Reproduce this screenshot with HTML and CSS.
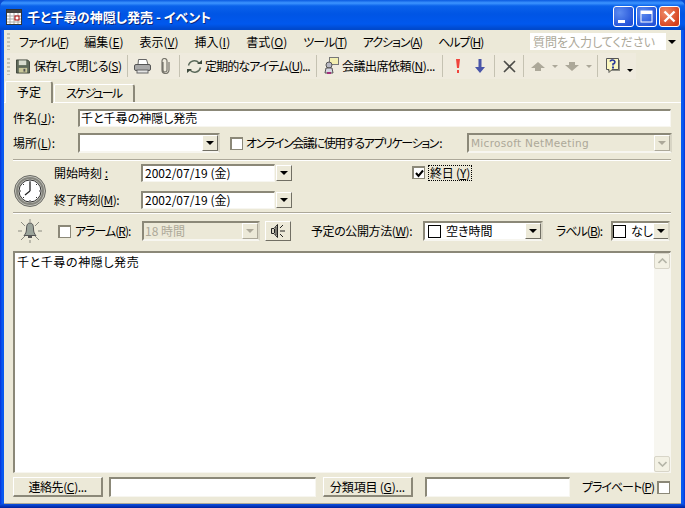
FILE: index.html
```html
<!DOCTYPE html>
<html lang="ja">
<head>
    <meta charset="UTF-8">
    <title>千と千尋の神隠し発売 - イベント</title>
    <link rel="stylesheet" href="styles.css">
</head>
<body>
    <div class="window">
        <div class="titlebar">
            <svg class="title-icon" width="16" height="16" viewBox="0 0 16 16">
                <rect x="0.5" y="0.5" width="15" height="15" fill="#fff" stroke="#333"/>
                <rect x="1" y="1" width="14" height="3" fill="#444"/>
                <path d="M1 7h14M1 10h14M1 13h14M4 4v11M8 4v11M12 4v11" stroke="#aaa"/>
                <rect x="9" y="7" width="4" height="4" fill="#fff" stroke="#a00"/>
            </svg>
            <span class="title-text">千と千尋の神隠し発売 - イベント</span>
            <div class="caption-btn">
                <svg width="21" height="21" viewBox="0 0 21 21"><rect x="5" y="14" width="7" height="3" fill="#fff"/></svg>
            </div>
            <div class="caption-btn">
                <svg width="21" height="21" viewBox="0 0 21 21"><rect x="5" y="5" width="11" height="11" fill="none" stroke="#fff"/><rect x="5" y="5" width="11" height="3" fill="#fff"/></svg>
            </div>
            <div class="caption-btn close">
                <svg width="21" height="21" viewBox="0 0 21 21"><path d="M5.5 5.5l10 10M15.5 5.5l-10 10" stroke="#fff" stroke-width="2.4"/></svg>
            </div>
        </div>

        <div class="content">
            <div class="menubar">
                <div class="grip"></div>
                <span class="menu-item kana">ファイル(<u>F</u>)</span>
                <span class="menu-item">編集(<u>E</u>)</span>
                <span class="menu-item">表示(<u>V</u>)</span>
                <span class="menu-item">挿入(<u>I</u>)</span>
                <span class="menu-item">書式(<u>O</u>)</span>
                <span class="menu-item kana">ツール(<u>T</u>)</span>
                <span class="menu-item kana">アクション(<u>A</u>)</span>
                <span class="menu-item kana">ヘルプ(<u>H</u>)</span>
                <div class="ask">
                    <span class="ask-text">質問を入力してください</span>
                    <span class="ask-arrow"><i class="arrow"></i></span>
                </div>
            </div>

            <div class="toolbar">
                <div class="grip"></div>
                <svg class="tool save" width="14" height="15" viewBox="0 0 15 15">
                    <path d="M0.5 0.5h12l2 2v12h-14z" fill="#5f6a5a" stroke="#3c4238"/>
                    <rect x="3" y="1" width="8" height="5" fill="#d9dccf"/>
                    <rect x="3" y="9" width="9" height="5" fill="#c9c79a"/>
                    <rect x="8" y="10" width="2" height="3" fill="#555"/>
                </svg>
                <span class="tool-text t-save">保存して閉じる(<u>S</u>)</span>
                <div class="tool-sep"></div>
                <svg class="tool print" width="17" height="15" viewBox="0 0 17 15">
                    <path d="M4.5 0.5h8l1.5 5h-10z" fill="#fff" stroke="#666"/>
                    <rect x="0.5" y="5.5" width="16" height="6" rx="1.5" fill="#a9a9a9" stroke="#555"/>
                    <rect x="3" y="11" width="11" height="3" fill="#e4e4e4" stroke="#666"/>
                </svg>
                <svg class="tool clip" width="10" height="16" viewBox="0 0 10 16">
                    <path d="M3 4v8a2 2 0 0 0 4 0V3a2.200 2.200 0 0 0-5 0v9a3.500 3.500 0 0 0 7 0V4" fill="none" stroke="#77756c" stroke-width="1.200"/>
                </svg>
                <div class="tool-sep"></div>
                <svg class="tool recur" width="17" height="15" viewBox="0 0 17 15">
                    <path d="M2.500 6.500A6 6 0 0 1 13 4" fill="none" stroke="#5b6a5b" stroke-width="1.400"/>
                    <path d="M14.500 8.500A6 6 0 0 1 4 11" fill="none" stroke="#5b6a5b" stroke-width="1.400"/>
                    <path d="M11 5h5V1zM6 10H1v4z" fill="#3d4a3d"/>
                </svg>
                <span class="tool-text t-recur">定期的なアイテム(<u>U</u>)...</span>
                <div class="tool-sep"></div>
                <svg class="tool meet" width="16" height="18" viewBox="0 0 16 18">
                    <rect x="6.500" y="0.500" width="9" height="7" fill="#f3efb0" stroke="#777"/>
                    <circle cx="6" cy="8" r="3" fill="#b9b9c4" stroke="#555"/>
                    <path d="M2 16l1-5h6l1 5z" fill="#d8d8e2" stroke="#555"/>
                    <rect x="4" y="15" width="4" height="2" fill="#a3307a"/>
                </svg>
                <span class="tool-text t-meet">会議出席依頼(<u>N</u>)...</span>
                <div class="tool-sep"></div>
                <svg class="tool excl" width="4" height="14" viewBox="0 0 4 14">
                    <path d="M0 0h4l-1 9H1zM1 11h2v3H1z" fill="#f0443c"/>
                </svg>
                <svg class="tool low" width="10" height="14" viewBox="0 0 10 14">
                    <path d="M3.500 0h3v8H10l-5 6-5-6h3.500z" fill="#4a55a8"/>
                </svg>
                <div class="tool-sep s-low"></div>
                <svg class="tool del" width="13" height="13" viewBox="0 0 13 13">
                    <path d="M1 1l11 11M12 1L1 12" stroke="#4c4c48" stroke-width="1.600"/>
                </svg>
                <div class="tool-sep s-del"></div>
                <svg class="tool up" width="14" height="9" viewBox="0 0 14 9"><path d="M7 0l7 6H10v3H4V6H0z" fill="#aca899"/></svg>
                <i class="mini-arrow a-up"></i>
                <svg class="tool down" width="14" height="9" viewBox="0 0 14 9"><path d="M4 0h6v3h4l-7 6-7-6h4z" fill="#aca899"/></svg>
                <i class="mini-arrow a-down"></i>
                <div class="tool-sep s-nav"></div>
                <svg class="tool help" width="14" height="16" viewBox="0 0 14 16">
                    <rect x="2" y="2" width="12" height="11" fill="#8d8d85"/>
                    <path d="M0.500 0.500h12v11H6l-3 3v-3H0.500z" fill="#fbf7c0" stroke="#555"/>
                    <path d="M4 3.500a2.500 2 0 1 1 3 2.500V7.500" fill="none" stroke="#2b3a9a" stroke-width="1.600"/>
                    <rect x="6" y="8.500" width="2" height="2" fill="#2b3a9a"/>
                </svg>
                <i class="mini-arrow a-help"></i>
            </div>

            <div class="tabs">
                <div class="tab active">予定</div>
                <div class="tab t-schedule">スケジュール</div>
            </div>

            <div class="panel">
                <div class="row r-subject">
                    <label class="lbl l-first">件名(<u>J</u>):</label>
                    <div class="field f-subject">千と千尋の神隠し発売</div>
                </div>
                <div class="row r-place">
                    <label class="lbl l-first">場所(<u>L</u>):</label>
                    <div class="field combo f-place"><span class="combo-btn"><i class="arrow"></i></span></div>
                    <span class="check c-online"></span>
                    <label class="lbl l-online">オンライン会議に使用するアプリケーション :</label>
                    <div class="field combo disabled f-app">
                        <span class="val latin">Microsoft NetMeeting</span>
                        <span class="combo-btn"><i class="arrow"></i></span>
                    </div>
                </div>
                <div class="sep"></div>

                <div class="time-block">
                    <svg class="clock" width="34" height="34" viewBox="0 0 34 34">
                        <circle cx="17" cy="17" r="15.500" fill="#c4c4bc" stroke="#6a6a64"/>
                        <circle cx="17" cy="17" r="13" fill="none" stroke="#86867e" stroke-width="2"/>
                        <circle cx="17" cy="17" r="11" fill="#fff" stroke="#333"/>
                        <path d="M17 17V8M17 17l-5 4" stroke="#222" stroke-width="1.300"/>
                        <path d="M17 7v1M17 26v1M7 17h1M26 17h1M10 10l1 1M23 23l1 1M24 10l-1 1M10 24l1-1" stroke="#333"/>
                    </svg>
                    <div class="time-rows">
                        <div class="row r-time">
                            <label class="lbl l-time">開始時刻 <u>:</u></label>
                            <div class="field f-date">2002/07/19 (金)</div>
                            <span class="btn-small"><i class="arrow"></i></span>
                            <span class="check checked c-allday">
                                <svg width="9" height="9" viewBox="0 0 9 9"><path d="M1 4l2.500 3L8 1.500" fill="none" stroke="#000" stroke-width="2"/></svg>
                            </span>
                            <label class="lbl l-allday">終日 (<u>Y</u>)</label>
                        </div>
                        <div class="row r-time r-end">
                            <label class="lbl l-time">終了時刻(<u>M</u>):</label>
                            <div class="field f-date">2002/07/19 (金)</div>
                            <span class="btn-small"><i class="arrow"></i></span>
                        </div>
                    </div>
                </div>
                <div class="sep s-second"></div>

                <div class="row r-alarm">
                    <svg class="bell" width="26" height="24" viewBox="0 0 26 24">
                        <path d="M13 0v3M13 21v3M1 12h4M21 12h4M4 3l4 4M22 3l-4 4M4 21l4-4M22 21l-4-4" stroke="#8a8a80"/>
                        <path d="M13 4c3 0 3.500 3 3.500 6 0 3 1 5 2.500 6.500H7C8.500 15 9.500 13 9.500 10c0-3 .5-6 3.500-6z" fill="#9aa39a" stroke="#555"/>
                        <rect x="11" y="17" width="4" height="2" fill="#555"/>
                    </svg>
                    <span class="check c-alarm"></span>
                    <label class="lbl l-alarm kana">アラーム(<u>R</u>):</label>
                    <div class="field combo disabled f-alarm">
                        <span class="val">18 時間</span>
                        <span class="combo-btn"><i class="arrow"></i></span>
                    </div>
                    <span class="sound-btn">
                        <svg width="15" height="14" viewBox="0 0 15 14">
                            <path d="M6.500 0.500v13L3 9.500H0.500v-5H3z" fill="#d8d5c5" stroke="#222"/>
                            <path d="M3.500 5v4M5 3v8" stroke="#222"/>
                            <path d="M9 4l3-3M9 7h5M9 10l3 3" fill="none" stroke="#222"/>
                        </svg>
                    </span>
                    <label class="lbl l-show">予定の公開方法(<u>W</u>):</label>
                    <div class="field combo f-show">
                        <span class="swatch"></span><span class="val">空き時間</span>
                        <span class="combo-btn"><i class="arrow"></i></span>
                    </div>
                    <label class="lbl l-label kana">ラベル(<u>B</u>):</label>
                    <div class="field combo f-label">
                        <span class="swatch"></span><span class="val">なし</span>
                        <span class="combo-btn"><i class="arrow"></i></span>
                    </div>
                </div>

                <div class="notes">
                    <div class="notes-text">千と千尋の神隠し発売</div>
                    <div class="scrollbar">
                        <span class="scroll-btn"><svg width="9" height="6" viewBox="0 0 9 6"><path d="M0.500 5l4-4 4 4" fill="none" stroke="#b5b5a8" stroke-width="1.600"/></svg></span>
                        <span class="scroll-btn"><svg width="9" height="6" viewBox="0 0 9 6"><path d="M0.500 1l4 4 4-4" fill="none" stroke="#b5b5a8" stroke-width="1.600"/></svg></span>
                    </div>
                </div>

                <div class="row r-bottom">
                    <button class="btn b-contact">連絡先(<u>C</u>)...</button>
                    <div class="field f-contact"></div>
                    <button class="btn b-category">分類項目 (<u>G</u>)...</button>
                    <div class="field f-category"></div>
                    <label class="lbl l-private kana">プライベート(<u>P</u>)</label>
                    <span class="check c-private"></span>
                </div>
            </div>
        </div>
    </div>
</body>
</html>
```

FILE: styles.css
```css
* {
    box-sizing: border-box;
}

html, body {
    margin: 0;
    padding: 0;
    background: #0a4ad0;
}

body {
    width: 685px;
    height: 508px;
    overflow: hidden;
    font-family: "Noto Sans CJK JP", "Liberation Sans", sans-serif;
    font-size: 12px;
    line-height: 14px;
    color: #000;
    font-feature-settings: "palt";
}

u {
    text-decoration: underline;
}

.kana {
    letter-spacing: -1px;
}

.window {
    width: 685px;
    height: 508px;
    display: flex;
    flex-direction: column;
    padding: 0 4px 4px;
    border-radius: 7px 7px 0 0;
    background:
        linear-gradient(transparent 504px, #0a50e0 504px, #00209a 508px),
        linear-gradient(90deg, #0831d9 0, #0a5af0 2px, #0a5af0 683px, #0831d9 685px);
}

.titlebar {
    height: 30px;
    flex: none;
    margin: 0 -4px;
    padding: 3px 5px 0 6px;
    display: flex;
    align-items: center;
    gap: 2px;
    border-radius: 7px 7px 0 0;
    background: linear-gradient(#0a5ae0 0, #3d95ff 3px, #0a62ea 6px, #0055e5 14px, #0058ee 24px, #0049cc 29px);
}

.title-icon {
    margin-right: 3px;
}

.title-text {
    flex: 1;
    color: #fff;
    font-weight: 700;
    font-size: 13px;
    text-shadow: 1px 1px 0 #0a2a80;
}

.caption-btn {
    width: 21px;
    height: 21px;
    border: 1px solid #fff;
    border-radius: 3px;
    background: radial-gradient(circle at 30% 30%, #5d8cf0, #2252d8 80%);
    display: flex;
}

.caption-btn svg {
    margin: -1px;
}

.caption-btn.close {
    background: radial-gradient(circle at 30% 30%, #ef8a66, #d5401c 80%);
}

.content {
    flex: 1;
    min-height: 0;
    background: #ece9d8;
    border-bottom: 1px solid #aca899;
    display: flex;
    flex-direction: column;
}

.grip {
    flex: none;
    width: 3px;
    height: 17px;
    margin-left: 3px;
    background: repeating-linear-gradient(#c6c3b2 0 2px, transparent 2px 4px);
}

.menubar {
    height: 23px;
    flex: none;
    display: flex;
    align-items: center;
}

.menu-item {
    margin-right: 16px;
    white-space: nowrap;
}

.menu-item:nth-child(2) {
    margin-left: 9px;
}

.ask {
    margin-left: auto;
    margin-right: 3px;
    width: 148px;
    height: 17px;
    background: #fff;
    display: flex;
    align-items: center;
    padding-left: 3px;
}

.ask-text {
    flex: 1;
    color: #aca899;
}

.ask-arrow {
    width: 12px;
    height: 17px;
    background: #ece9d8;
    display: flex;
    align-items: center;
    justify-content: center;
}

.arrow {
    display: block;
    width: 0;
    height: 0;
    border-left: 4px solid transparent;
    border-right: 4px solid transparent;
    border-top: 4px solid #000;
}

.toolbar {
    height: 26px;
    width: 632px;
    flex: none;
    display: flex;
    align-items: center;
    background: #efebde;
    white-space: nowrap;
}

.tool, .tool-text, .tool-sep, .mini-arrow {
    flex: none;
}

.tool-sep {
    width: 1px;
    height: 22px;
    background: #c5c2b2;
}

.save { margin-left: 6px; }
.t-save { margin-left: 4px; width: 86px; letter-spacing: -0.600px; }
.toolbar .t-save + .tool-sep { margin-left: 7px; }
.print { margin-left: 6px; }
.clip { margin-left: 9px; margin-right: 9px; }
.recur { margin-left: 6px; }
.t-recur { margin-left: 2px; width: 105px; margin-right: 6px; letter-spacing: -0.900px; }
.meet { margin-left: 6px; }
.t-meet { margin-left: 3px; width: 94px; margin-right: 6px; letter-spacing: -0.500px; }
.excl { margin-left: 13px; }
.low { margin-left: 15px; }
.s-low { margin-left: 9px; }
.del { margin-left: 8px; }
.s-del { margin-left: 7px; }
.up { margin-left: 7px; }
.down { margin-left: 7px; }
.s-nav { margin-left: 5px; }
.help { margin-left: 8px; }

.mini-arrow {
    display: block;
    width: 0;
    height: 0;
    margin-left: 7px;
    border-left: 3px solid transparent;
    border-right: 3px solid transparent;
    border-top: 3px solid #aca899;
}

.a-help {
    margin-left: 7px;
    margin-top: 9px;
    border-top-color: #000;
}

.tabs {
    height: 23px;
    flex: none;
    display: flex;
    align-items: flex-end;
    padding-left: 1px;
}

.tab {
    height: 18px;
    padding: 1px 11px 0;
    background: #ece9d8;
    border: 1px solid #fff;
    border-right: 2px solid #8b8878;
    border-bottom: none;
    border-radius: 2px 3px 0 0;
    white-space: nowrap;
}

.tab.active {
    height: 22px;
    width: 48px;
    padding: 3px 11px 0;
    margin-bottom: -1px;
    margin-right: 1px;
    position: relative;
    z-index: 1;
}

.t-schedule {
    width: 81px;
    letter-spacing: -1.800px;
}

.panel {
    flex: 1;
    min-height: 0;
    border-top: 1px solid #fff;
    padding: 6px 8px 0 9px;
    display: flex;
    flex-direction: column;
}

.row {
    display: flex;
    align-items: center;
    flex: none;
}

.lbl {
    white-space: nowrap;
    flex: none;
}

.field {
    height: 18px;
    flex: none;
    background: #fff;
    border: 2px solid #8b8878;
    border-right: 1px solid #f7f6f0;
    border-bottom: 1px solid #f7f6f0;
    white-space: nowrap;
    overflow: hidden;
    padding-left: 1px;
}

.combo {
    display: flex;
    align-items: center;
    height: 20px;
    border-right: 2px solid #d8d5c5;
    border-bottom: 2px solid #f7f6f0;
}

.combo .val {
    flex: 1;
}

.combo-btn, .btn-small {
    flex: none;
    width: 16px;
    height: 16px;
    margin-left: auto;
    background: #ece9d8;
    border: 1px solid #716f64;
    border-top-color: #fff;
    border-left-color: #fff;
    display: flex;
    align-items: center;
    justify-content: center;
}

.disabled {
    background: #ece9d8;
    color: #aca899;
}

.disabled .arrow {
    border-top-color: #aca899;
}

.disabled .combo-btn {
    border-right-color: #aca899;
    border-bottom-color: #aca899;
}

.latin {
    font-family: "DejaVu Sans", sans-serif;
    font-size: 10.500px;
    letter-spacing: 0.300px;
}

.check {
    flex: none;
    width: 13px;
    height: 13px;
    background: #fff;
    border: 1px solid #8b8878;
    border-top-width: 2px;
    border-left-width: 2px;
    display: flex;
    align-items: center;
    justify-content: center;
}

.r-subject {
    height: 18px;
}

.l-first {
    width: 65px;
}

.f-subject {
    width: 593px;
}

.r-place {
    height: 20px;
    margin-top: 6px;
}

.f-place {
    width: 142px;
}

.c-online {
    margin-left: 10px;
}

.l-online {
    margin-left: 3px;
    width: 221px;
    letter-spacing: -1.400px;
}

.f-app {
    width: 205px;
    padding-left: 2px;
}

.sep {
    height: 2px;
    flex: none;
    margin-top: 6px;
    width: 658px;
    background: #aca899;
    border-bottom: 1px solid #fff;
}

.time-block {
    display: flex;
    align-items: center;
    height: 51px;
    flex: none;
}

.clock {
    flex: none;
    margin-top: 8px;
}

.time-rows {
    margin-left: 7px;
    display: flex;
    flex-direction: column;
    gap: 9px;
}

.r-time {
    height: 18px;
}

.l-time {
    width: 87px;
}

.r-end .l-time {
    letter-spacing: -0.500px;
}

.f-date {
    width: 134px;
    padding-left: 2px;
}

.btn-small {
    margin-left: 1px;
}

.c-allday {
    margin-left: 120px;
    margin-top: -1px;
}

.l-allday {
    margin-left: 4px;
    outline: 1px dotted #000;
    padding: 0 1px;
    letter-spacing: -0.200px;
}

.s-second {
    margin-top: 0;
}

.r-alarm {
    height: 22px;
    margin-top: 6px;
}

.bell {
    flex: none;
    margin-left: 4px;
}

.c-alarm {
    margin-left: 15px;
}

.l-alarm {
    margin-left: 4px;
    width: 67px;
}

.f-alarm {
    width: 118px;
}

.sound-btn {
    flex: none;
    width: 26px;
    height: 20px;
    margin-left: 5px;
    margin-right: 20px;
    background: #ece9d8;
    border: 1px solid #716f64;
    border-top-color: #fff;
    border-left-color: #fff;
    display: flex;
    align-items: center;
    justify-content: center;
}

.l-show {
    width: 112px;
    letter-spacing: -0.400px;
}

.f-show {
    width: 120px;
    padding-left: 3px;
}

.swatch {
    flex: none;
    width: 13px;
    height: 13px;
    margin-right: 5px;
    border: 1px solid #000;
    background: #fff;
}

.l-label {
    margin-left: 13px;
    width: 55px;
}

.f-label {
    width: 59px;
    padding-left: 0;
}

.notes {
    height: 222px;
    margin-top: 9px;
    flex: none;
    width: 658px;
    display: flex;
    background: #fff;
    border: 2px solid #8b8878;
    border-right: 1px solid #f7f6f0;
    border-bottom: 1px solid #f7f6f0;
}

.notes-text {
    flex: 1;
    padding: 2px;
    letter-spacing: 0.600px;
}

.scrollbar {
    width: 16px;
    display: flex;
    flex-direction: column;
    justify-content: space-between;
    background: #f7f6f0;
}

.scroll-btn {
    width: 16px;
    height: 16px;
    background: #f3f1e4;
    border: 1px solid #d8d5c8;
    border-radius: 2px;
    display: flex;
    align-items: center;
    justify-content: center;
}

.r-bottom {
    height: 20px;
    margin-top: 4px;
}

.btn {
    flex: none;
    height: 20px;
    padding: 0;
    font: inherit;
    font-feature-settings: "palt";
    background: #ece9d8;
    border: 1px solid #fff;
    border-right: 2px solid #8b8878;
    border-bottom: 2px solid #8b8878;
}

.b-contact {
    width: 90px;
    letter-spacing: -0.400px;
}

.f-contact {
    width: 207px;
    height: 20px;
    margin-left: 6px;
}

.b-category {
    width: 90px;
    margin-left: 7px;
    letter-spacing: -0.200px;
}

.f-category {
    width: 145px;
    height: 20px;
    margin-left: 12px;
}

.l-private {
    margin-left: 12px;
    width: 75px;
}
```
